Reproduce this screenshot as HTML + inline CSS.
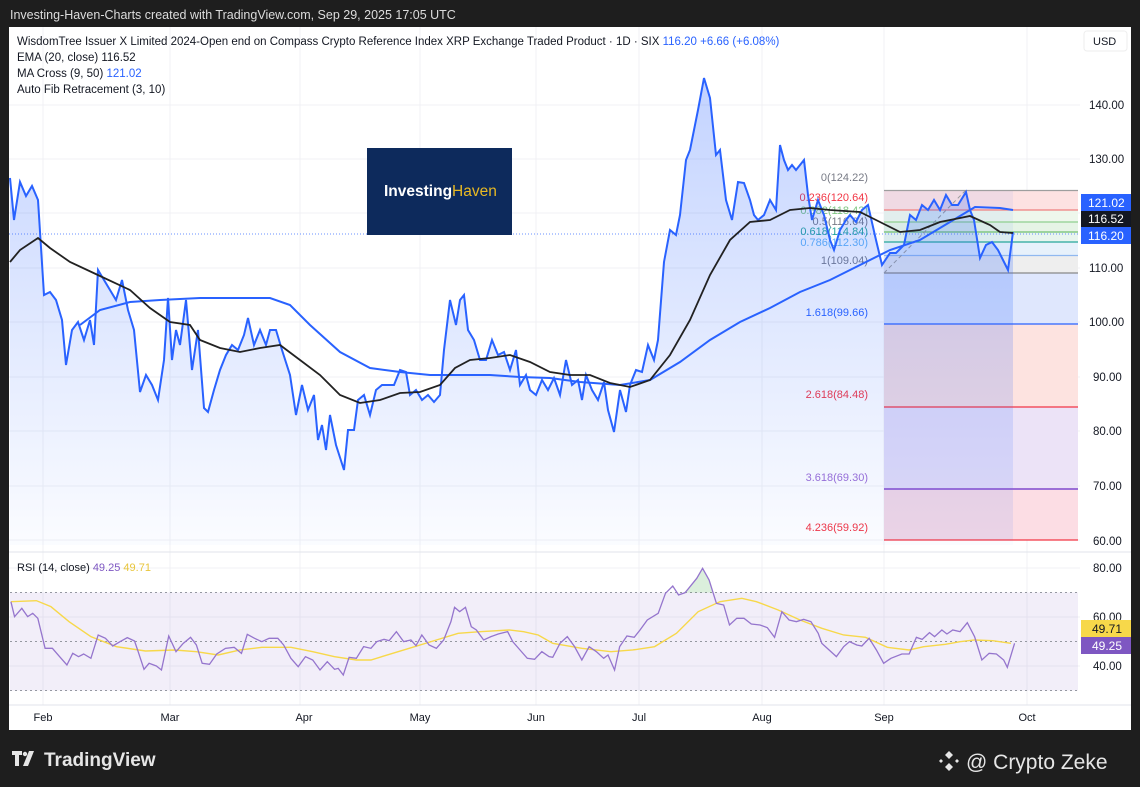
<!DOCTYPE html>
<html><head><meta charset="utf-8"><style>
html,body{margin:0;padding:0;background:#1e1e1e;width:1140px;height:787px;overflow:hidden;font-family:"Liberation Sans",sans-serif}
svg{position:absolute;left:0;top:0}
</style></head><body>
<svg width="1140" height="787" viewBox="0 0 1140 787" xmlns="http://www.w3.org/2000/svg" font-family="Liberation Sans, sans-serif">
<defs>
<linearGradient id="pf" x1="0" y1="0" x2="0" y2="1">
<stop offset="0" stop-color="#2962ff" stop-opacity="0.28"/>
<stop offset="1" stop-color="#2962ff" stop-opacity="0.02"/>
</linearGradient>
<clipPath id="rc"><rect x="9" y="553" width="1072" height="152"/></clipPath>
</defs>
<rect x="0" y="0" width="1140" height="787" fill="#1e1e1e"/>
<text x="10" y="19" fill="#dcdcdc" font-size="12.5">Investing-Haven-Charts created with TradingView.com, Sep 29, 2025 17:05 UTC</text>
<rect x="9" y="27" width="1122" height="703" fill="#ffffff"/>
<g stroke="#f0f1f4" stroke-width="1">
<line x1="43" y1="27" x2="43" y2="705"/><line x1="170" y1="27" x2="170" y2="705"/><line x1="300" y1="27" x2="300" y2="705"/><line x1="420" y1="27" x2="420" y2="705"/><line x1="536" y1="27" x2="536" y2="705"/><line x1="639" y1="27" x2="639" y2="705"/><line x1="762" y1="27" x2="762" y2="705"/><line x1="884" y1="27" x2="884" y2="705"/><line x1="1027" y1="27" x2="1027" y2="705"/>
<line x1="9" y1="105" x2="1080" y2="105"/><line x1="9" y1="159" x2="1080" y2="159"/><line x1="9" y1="213" x2="1080" y2="213"/><line x1="9" y1="268" x2="1080" y2="268"/><line x1="9" y1="322" x2="1080" y2="322"/><line x1="9" y1="377" x2="1080" y2="377"/><line x1="9" y1="431" x2="1080" y2="431"/><line x1="9" y1="486" x2="1080" y2="486"/><line x1="9" y1="540" x2="1080" y2="540"/>
<line x1="9" y1="568" x2="1080" y2="568"/><line x1="9" y1="617" x2="1080" y2="617"/><line x1="9" y1="666" x2="1080" y2="666"/>
</g>
<rect x="884" y="190.5" width="194" height="19.5" fill="#fde2e2"/>
<rect x="884" y="210" width="194" height="12" fill="#eef7ec"/>
<rect x="884" y="222" width="194" height="10" fill="#e6f4e6"/>
<rect x="884" y="232" width="194" height="10" fill="#e8f5ef"/>
<rect x="884" y="242" width="194" height="13.5" fill="#e7f1fb"/>
<rect x="884" y="255.5" width="194" height="17.5" fill="#eeeeee"/>
<rect x="884" y="273" width="194" height="51" fill="#dfe7fd"/>
<rect x="884" y="324" width="194" height="83" fill="#fde3e0"/>
<rect x="884" y="407" width="194" height="82" fill="#ece3f7"/>
<rect x="884" y="489" width="194" height="51" fill="#fcdde4"/>
<rect x="884" y="190.5" width="129" height="350" fill="#2962ff" fill-opacity="0.06"/>
<g stroke-width="1.2">
<line x1="884" y1="190.5" x2="1078" y2="190.5" stroke="#9e9e9e"/>
<line x1="884" y1="210" x2="1078" y2="210" stroke="#f08080"/>
<line x1="884" y1="222" x2="1078" y2="222" stroke="#8fcf8f"/>
<line x1="884" y1="232" x2="1078" y2="232" stroke="#6fbf6f"/>
<line x1="884" y1="242" x2="1078" y2="242" stroke="#26a69a"/>
<line x1="884" y1="255.5" x2="1078" y2="255.5" stroke="#90b8f0"/>
<line x1="884" y1="273" x2="1078" y2="273" stroke="#888"/>
<line x1="884" y1="324" x2="1078" y2="324" stroke="#2962ff"/>
<line x1="884" y1="407" x2="1078" y2="407" stroke="#f23645"/>
<line x1="884" y1="489" x2="1078" y2="489" stroke="#9c6fd6" stroke-width="2"/>
<line x1="884" y1="540" x2="1078" y2="540" stroke="#f23645"/>
</g>
<line x1="884" y1="273" x2="966" y2="190" stroke="#999" stroke-dasharray="4,3"/>
<line x1="9" y1="234" x2="1080" y2="234" stroke="#2962ff" stroke-dasharray="1,2" stroke-opacity="0.7"/>
<g font-size="11" text-anchor="end">
<text x="868" y="181" fill="#787b86">0(124.22)</text>
<text x="868" y="201" fill="#f23645">0.236(120.64)</text>
<text x="868" y="214" fill="#81c784">0.382(118.42)</text>
<text x="868" y="225" fill="#787b86">0.5(116.64)</text>
<text x="868" y="235" fill="#26a69a">0.618(114.84)</text>
<text x="868" y="246" fill="#64b5f6">0.786(112.30)</text>
<text x="868" y="264" fill="#787b86">1(109.04)</text>
<text x="868" y="316" fill="#2962ff">1.618(99.66)</text>
<text x="868" y="398" fill="#f23645">2.618(84.48)</text>
<text x="868" y="481" fill="#9c6fd6">3.618(69.30)</text>
<text x="868" y="531" fill="#f23645">4.236(59.92)</text>
</g>
<path d="M10,178 L14,220 L20,182 L26,196 L32,186 L38,200 L44,295 L50,292 L56,300 L62,320 L66,365 L72,330 L78,322 L84,340 L90,320 L94,345 L98,270 L104,280 L110,290 L116,300 L122,280 L128,310 L134,330 L140,392 L146,375 L152,385 L158,400 L164,360 L168,298 L172,360 L176,330 L180,345 L186,300 L192,370 L198,330 L204,408 L208,412 L214,390 L220,370 L226,355 L232,345 L238,350 L244,335 L248,318 L254,345 L260,330 L266,345 L270,330 L276,330 L282,350 L290,375 L296,415 L302,385 L308,410 L314,395 L318,440 L322,425 L326,450 L330,415 L336,445 L344,470 L348,430 L354,430 L358,400 L364,395 L370,415 L376,390 L382,385 L388,385 L394,385 L400,370 L406,372 L410,395 L416,390 L422,400 L428,395 L434,402 L440,395 L444,350 L450,300 L456,325 L460,300 L464,295 L468,330 L474,340 L480,360 L486,360 L492,340 L498,355 L504,352 L510,370 L516,350 L520,385 L526,375 L530,390 L536,395 L542,380 L548,390 L554,378 L560,395 L566,360 L572,385 L578,380 L582,400 L586,375 L592,390 L598,400 L604,382 L608,410 L614,432 L620,390 L626,412 L630,385 L636,370 L642,372 L648,345 L654,360 L658,340 L664,262 L670,230 L676,235 L680,215 L686,160 L690,150 L694,130 L698,110 L704,78 L710,98 L716,155 L720,150 L726,200 L732,220 L738,182 L744,183 L750,200 L754,215 L758,220 L764,215 L770,200 L776,210 L780,145 L784,160 L788,170 L792,165 L796,170 L800,165 L804,160 L808,195 L812,220 L818,200 L824,215 L830,240 L834,250 L840,230 L846,220 L850,215 L856,222 L862,210 L868,205 L876,240 L882,265 L890,253 L896,253 L904,245 L910,215 L916,220 L922,205 L928,210 L934,200 L940,210 L946,195 L952,205 L958,205 L966,192 L970,210 L974,220 L980,258 L986,245 L992,242 L998,250 L1004,262 L1008,270 L1013,232 L1013,545 L10,545 Z" fill="url(#pf)"/>
<path d="M10,178 L14,220 L20,182 L26,196 L32,186 L38,200 L44,295 L50,292 L56,300 L62,320 L66,365 L72,330 L78,322 L84,340 L90,320 L94,345 L98,270 L104,280 L110,290 L116,300 L122,280 L128,310 L134,330 L140,392 L146,375 L152,385 L158,400 L164,360 L168,298 L172,360 L176,330 L180,345 L186,300 L192,370 L198,330 L204,408 L208,412 L214,390 L220,370 L226,355 L232,345 L238,350 L244,335 L248,318 L254,345 L260,330 L266,345 L270,330 L276,330 L282,350 L290,375 L296,415 L302,385 L308,410 L314,395 L318,440 L322,425 L326,450 L330,415 L336,445 L344,470 L348,430 L354,430 L358,400 L364,395 L370,415 L376,390 L382,385 L388,385 L394,385 L400,370 L406,372 L410,395 L416,390 L422,400 L428,395 L434,402 L440,395 L444,350 L450,300 L456,325 L460,300 L464,295 L468,330 L474,340 L480,360 L486,360 L492,340 L498,355 L504,352 L510,370 L516,350 L520,385 L526,375 L530,390 L536,395 L542,380 L548,390 L554,378 L560,395 L566,360 L572,385 L578,380 L582,400 L586,375 L592,390 L598,400 L604,382 L608,410 L614,432 L620,390 L626,412 L630,385 L636,370 L642,372 L648,345 L654,360 L658,340 L664,262 L670,230 L676,235 L680,215 L686,160 L690,150 L694,130 L698,110 L704,78 L710,98 L716,155 L720,150 L726,200 L732,220 L738,182 L744,183 L750,200 L754,215 L758,220 L764,215 L770,200 L776,210 L780,145 L784,160 L788,170 L792,165 L796,170 L800,165 L804,160 L808,195 L812,220 L818,200 L824,215 L830,240 L834,250 L840,230 L846,220 L850,215 L856,222 L862,210 L868,205 L876,240 L882,265 L890,253 L896,253 L904,245 L910,215 L916,220 L922,205 L928,210 L934,200 L940,210 L946,195 L952,205 L958,205 L966,192 L970,210 L974,220 L980,258 L986,245 L992,242 L998,250 L1004,262 L1008,270 L1013,232" fill="none" stroke="#2962ff" stroke-width="2"/>
<path d="M80,325 L100,310 L130,302 L160,300 L200,298 L240,298 L270,298 L290,305 L310,325 L340,352 L370,368 L400,372 L430,375 L460,375 L490,375 L520,377 L550,378 L580,382 L620,385 L650,380 L680,362 L710,340 L740,322 L770,308 L800,292 L830,280 L860,265 L890,250 L920,240 L950,222 L975,207 L1000,208 L1013,210" fill="none" stroke="#2962ff" stroke-width="2"/>
<path d="M10,262 L20,250 L38,238 L50,248 L70,262 L100,276 L130,290 L150,308 L170,322 L190,325 L200,340 L220,348 L240,352 L260,348 L280,345 L300,360 L320,375 L340,395 L360,403 L380,400 L400,393 L420,392 L440,385 L455,368 L470,360 L490,358 L510,355 L530,362 L550,372 L570,375 L590,375 L610,383 L630,387 L650,380 L670,355 L690,320 L710,275 L730,240 L750,222 L770,220 L790,210 L810,208 L830,210 L860,212 L880,222 L900,232 L920,230 L940,222 L960,218 L970,216 L990,225 L1000,232 L1013,233" fill="none" stroke="#222" stroke-width="1.8"/>
<rect x="367" y="148" width="145" height="87" fill="#0d2a5c"/>
<text x="384" y="196" font-size="15.5" font-weight="bold" fill="#ffffff">Investing<tspan fill="#e8b923" font-weight="normal">Haven</tspan></text>
<g font-size="11.5" fill="#131722">
<text x="17" y="45">WisdomTree Issuer X Limited 2024-Open end on Compass Crypto Reference Index XRP Exchange Traded Product · 1D · SIX <tspan fill="#2962ff">116.20  +6.66 (+6.08%)</tspan></text>
<text x="17" y="61">EMA (20, close)  116.52</text>
<text x="17" y="77">MA Cross (9, 50)  <tspan fill="#2962ff">121.02</tspan></text>
<text x="17" y="93">Auto Fib Retracement (3, 10)</text>
</g>
<rect x="1084" y="31" width="43" height="20" rx="3" fill="#fff" stroke="#eee"/>
<text x="1093" y="45" font-size="11" fill="#131722">USD</text>
<g font-size="11.5" fill="#131722">
<text x="1089" y="109">140.00</text><text x="1089" y="163">130.00</text><text x="1089" y="272">110.00</text><text x="1089" y="326">100.00</text><text x="1093" y="381">90.00</text><text x="1093" y="435">80.00</text><text x="1093" y="490">70.00</text><text x="1093" y="545">60.00</text>
<text x="1093" y="572">80.00</text><text x="1093" y="621">60.00</text><text x="1093" y="670">40.00</text>
</g>
<rect x="1081" y="194" width="50" height="17" fill="#2962ff"/><text x="1088" y="207" font-size="12" fill="#fff">121.02</text>
<rect x="1081" y="211" width="50" height="16" fill="#131722"/><text x="1088" y="223" font-size="12" fill="#fff">116.52</text>
<rect x="1081" y="227" width="50" height="17" fill="#2962ff"/><text x="1088" y="240" font-size="12" fill="#fff">116.20</text>
<line x1="9" y1="552" x2="1131" y2="552" stroke="#e0e3eb"/>
<rect x="10" y="592.5" width="1068" height="98" fill="#7e57c2" fill-opacity="0.1"/>
<g stroke="#9598a1" stroke-dasharray="2,3">
<line x1="10" y1="592.5" x2="1078" y2="592.5"/><line x1="10" y1="641.5" x2="1078" y2="641.5"/><line x1="10" y1="690.5" x2="1078" y2="690.5"/>
</g>
<text x="17" y="571" font-size="11" fill="#131722">RSI (14, close)  <tspan fill="#7e57c2">49.25</tspan>  <tspan fill="#e8c53a">49.71</tspan></text>
<g clip-path="url(#rc)">
<g transform="translate(0,550) scale(0.7273,0.3333)">
<path d="M940,128 L948,112 L958,85 L966,55 L975,90 L980,128 Z" fill="#4caf50" fill-opacity="0.2"/>
<path d="M15,155 L50,152 L70,170 L95,215 L125,260 L160,290 L200,303 L240,300 L270,305 L300,315 L330,300 L360,292 L400,292 L430,305 L460,320 L490,330 L510,330 L540,310 L570,290 L600,270 L630,250 L660,245 L700,240 L720,245 L740,255 L760,280 L800,295 L840,305 L870,300 L900,290 L930,250 L960,185 L990,155 L1020,145 L1040,155 L1070,180 L1100,210 L1130,235 L1160,255 L1190,262 L1220,292 L1250,300 L1270,290 L1300,283 L1320,275 L1340,270 L1365,272 L1390,280" fill="none" stroke="#f7d84a" stroke-width="1.4" vector-effect="non-scaling-stroke"/>
<path d="M15,155 L20,200 L30,175 L38,200 L45,190 L52,205 L62,295 L72,295 L82,320 L92,345 L100,310 L108,320 L115,312 L125,325 L135,255 L145,265 L155,288 L165,275 L175,263 L185,273 L190,305 L198,358 L205,340 L215,348 L222,360 L232,258 L242,305 L252,280 L262,262 L270,285 L278,340 L288,343 L298,312 L310,295 L322,292 L332,310 L340,253 L350,265 L360,275 L370,265 L382,265 L390,285 L400,325 L410,350 L420,320 L430,330 L440,360 L450,335 L460,358 L465,355 L472,375 L480,322 L490,325 L500,290 L510,295 L518,275 L528,268 L535,272 L545,245 L555,275 L565,270 L572,287 L580,255 L590,285 L600,295 L610,270 L620,215 L625,172 L632,185 L640,172 L648,230 L655,240 L665,270 L675,260 L685,252 L698,245 L705,275 L715,300 L725,325 L735,328 L745,305 L755,320 L760,322 L770,280 L780,260 L790,290 L800,330 L810,290 L820,305 L830,325 L836,315 L845,360 L852,290 L862,258 L872,262 L880,240 L890,210 L905,190 L915,130 L925,108 L933,135 L942,128 L948,112 L958,85 L966,55 L975,90 L985,160 L995,165 L1003,225 L1013,205 L1023,205 L1033,222 L1045,225 L1055,233 L1065,262 L1075,185 L1085,210 L1095,215 L1105,208 L1115,215 L1125,250 L1130,280 L1140,300 L1150,320 L1160,290 L1168,275 L1178,285 L1185,288 L1195,265 L1205,300 L1215,340 L1225,325 L1240,312 L1250,312 L1260,262 L1268,268 L1278,248 L1285,260 L1295,240 L1302,252 L1310,240 L1320,245 L1330,218 L1340,260 L1350,330 L1360,310 L1370,312 L1380,330 L1385,352 L1395,280" fill="none" stroke="#9575cd" stroke-width="1.3" vector-effect="non-scaling-stroke"/>
</g>
</g>
<rect x="1081" y="620" width="50" height="17" fill="#f7d84a"/><text x="1092" y="633" font-size="12" fill="#131722">49.71</text>
<rect x="1081" y="637" width="50" height="17" fill="#7e57c2"/><text x="1092" y="650" font-size="12" fill="#fff">49.25</text>
<line x1="9" y1="705" x2="1131" y2="705" stroke="#e0e3eb"/>
<g font-size="11" fill="#131722" text-anchor="middle">
<text x="43" y="721">Feb</text><text x="170" y="721">Mar</text><text x="304" y="721">Apr</text><text x="420" y="721">May</text><text x="536" y="721">Jun</text><text x="639" y="721">Jul</text><text x="762" y="721">Aug</text><text x="884" y="721">Sep</text><text x="1027" y="721">Oct</text>
</g>
<g fill="#e6e6e6">
<path d="M12,751 h10 v4 h-3 v11 h-4 v-11 h-3 z"/>
<circle cx="25" cy="754" r="2.2"/>
<path d="M29,751 h5 l-6,15 h-5 z"/>
</g>
<text x="44" y="766" font-size="19" fill="#e6e6e6" font-weight="bold">TradingView</text>
<g fill="#e6e6e6" transform="translate(949,761)">
<path d="M0,-10 l4,4 l-4,4 l-4,-4 z"/><path d="M0,2 l4,4 l-4,4 l-4,-4 z"/>
<path d="M-8,-2 l2,2 l-2,2 l-2,-2 z"/><path d="M8,-2 l2,2 l-2,2 l-2,-2 z"/>
</g>
<text x="966" y="769" font-size="21" fill="#e6e6e6">@ Crypto Zeke</text>
</svg>
</body></html>
